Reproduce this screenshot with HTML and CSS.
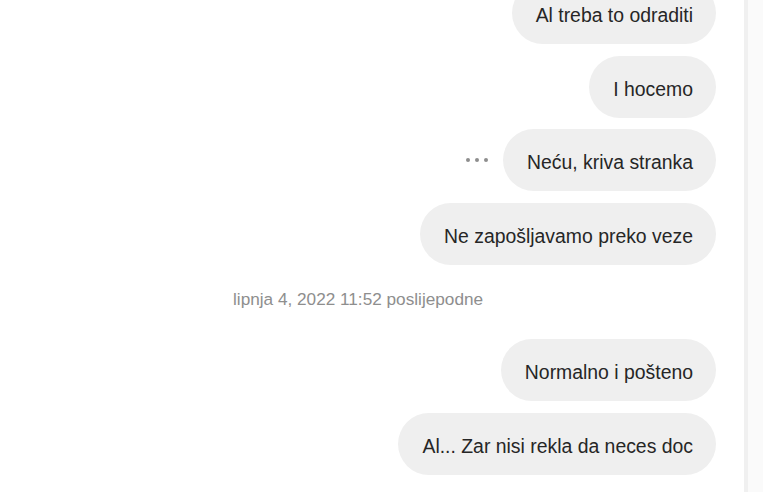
FILE: index.html
```html
<!DOCTYPE html>
<html lang="hr">
<head>
    <meta charset="UTF-8">
    <meta name="viewport" content="width=device-width, initial-scale=1.0">
    <title>Poruke</title>
    <link rel="stylesheet" href="styles.css">
</head>
<body>

<div class="layout">
    <div class="chat">
        <div class="messages">
            <div class="msg-row first">
                <div class="bubble">Al treba to odraditi</div>
            </div>
            <div class="msg-row">
                <div class="bubble">I hocemo</div>
            </div>
            <div class="msg-row">
                <span class="more"><i></i><i></i><i></i></span>
                <div class="bubble">Neću, kriva stranka</div>
            </div>
            <div class="msg-row">
                <div class="bubble">Ne zapošljavamo preko veze</div>
            </div>

            <div class="timestamp">lipnja 4, 2022 11:52 poslijepodne</div>

            <div class="msg-row">
                <div class="bubble">Normalno i pošteno</div>
            </div>
            <div class="msg-row">
                <div class="bubble">Al... Zar nisi rekla da neces doc</div>
            </div>
        </div>
    </div>
    <div class="side"></div>
</div>

</body>
</html>
```

FILE: styles.css
```css
body {
    font-family: 'Liberation Sans', Arial, sans-serif;
    margin: 0;
    padding: 0;
    background-color: #fff;
    color: #262626;
    overflow: hidden;
}

.layout {
    display: flex;
    height: 492px;
}

.chat {
    flex: 1;
    border-right: 4px solid #f0f0f0;
    overflow: hidden;
}

.side {
    width: 15px;
    background-color: #fafafa;
}

.messages {
    display: flex;
    flex-direction: column;
    align-items: flex-end;
    gap: 11.67px;
    padding-right: 28px;
}

.msg-row {
    display: flex;
    align-items: center;
    gap: 15px;
}

.msg-row.first {
    margin-top: -18px;
}

.bubble {
    background-color: #efefef;
    height: 62px;
    line-height: 66px;
    padding: 0 23px 0 24px;
    border-radius: 31px;
    font-size: 19.4px;
    white-space: nowrap;
}

.more {
    display: flex;
    gap: 5px;
}

.more i {
    width: 4px;
    height: 4px;
    border-radius: 50%;
    background-color: #8e8e8e;
}

.timestamp {
    align-self: flex-start;
    margin: 12px 0 19px 233px;
    font-size: 17.2px;
    line-height: 20px;
    color: #8e8e8e;
}
```
